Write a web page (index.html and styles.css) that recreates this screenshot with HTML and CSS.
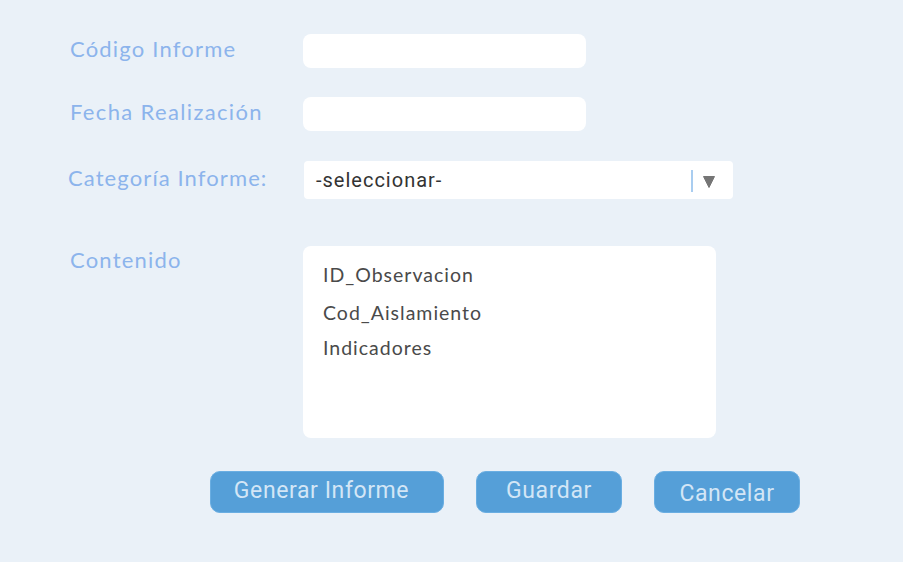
FILE: index.html
```html
<!DOCTYPE html>
<html lang="es">
<head>
<meta charset="utf-8">
<title>Informe</title>
<link rel="stylesheet" href="styles.css">
</head>
<body>
<main class="form">
  <div class="row row-1">
    <label class="label">Código Informe</label>
    <div class="input"></div>
  </div>
  <div class="row row-2">
    <label class="label label-long">Fecha Realización</label>
    <div class="input"></div>
  </div>
  <div class="row row-3">
    <label class="label label-cat">Categoría Informe:</label>
    <div class="select">
      <span class="select-text">-seleccionar-</span>
      <span class="select-divider"></span>
      <svg class="select-arrow" width="12" height="12" viewBox="0 0 12 12"><path d="M0.5 0.5 H11.5 L6 11.5 Z" fill="#757575" stroke="#757575" stroke-width="1" stroke-linejoin="round"/></svg>
    </div>
  </div>
  <div class="row row-4">
    <label class="label">Contenido</label>
    <div class="textarea">
      <div class="item item-1">ID_Observacion</div>
      <div class="item item-2">Cod_Aislamiento</div>
      <div class="item item-3">Indicadores</div>
    </div>
  </div>
  <div class="buttons">
    <button class="btn btn-wide">Generar Informe</button>
    <button class="btn">Guardar</button>
    <button class="btn btn-cancel">Cancelar</button>
  </div>
</main>
</body>
</html>
```
FILE: styles.css
```css
html, body {
  margin: 0;
  padding: 0;
  background: #eaf1f8;
  width: 903px;
  height: 562px;
  overflow: hidden;
}
.form {
  padding: 34px 0 0 70px;
  display: flex;
  flex-direction: column;
  font-family: "Lato", "Open Sans", sans-serif;
}
.row {
  display: flex;
  align-items: flex-start;
}
.label {
  width: 233px;
  flex: none;
  font-size: 22px;
  line-height: 26px;
  color: #8cb4ec;
  letter-spacing: 1.2px;
}
.label-long { letter-spacing: 1.35px; }
.row-1 .label { margin-top: 2px; }
.row-2 { margin-top: 29px; }
.row-2 .label { margin-top: 2px; }
.row-3 { margin-top: 30px; }
.row-4 { margin-top: 47px; }
.input {
  width: 283px;
  height: 34px;
  background: #fff;
  border-radius: 8px;
}
.label-cat {
  margin-left: -2px;
  width: 236px;
  margin-top: 4px;
  letter-spacing: 1.1px;
}
.select {
  width: 429px;
  height: 38px;
  background: #fff;
  border-radius: 4px;
  display: flex;
  align-items: center;
  font-family: "Roboto", sans-serif;
}
.select-text {
  margin-left: 12px;
  font-size: 20px;
  color: #333;
  flex: 1;
  letter-spacing: 1px;
}
.select-divider {
  width: 2px;
  height: 22px;
  background: #a9cdf0;
  margin-right: 10px;
  margin-top: 2px;
}
.select-arrow {
  margin-right: 18px;
  margin-top: 3px;
}
.row-4 .label { margin-top: 1px; }
.textarea {
  width: 413px;
  height: 192px;
  background: #fff;
  border-radius: 8px;
  padding: 17px 0 0 20px;
  box-sizing: border-box;
  color: #4a4a4a;
  font-size: 19.5px;
  letter-spacing: 1px;
}
.item { line-height: 24px; }
.item-2 { margin-top: 14px; }
.item-3 { margin-top: 11px; }
.buttons {
  display: flex;
  gap: 32px;
  margin-top: 33px;
  margin-left: 140px;
}
.btn {
  width: 146px;
  height: 42px;
  border: 1px solid #6aaee2;
  background: #559fd8;
  border-radius: 10px;
  color: #d3e6f6;
  font-family: "Roboto", "Open Sans", sans-serif;
  font-size: 23px;
  letter-spacing: 0.6px;
  padding: 0;
  padding-bottom: 3px;
}
.btn-wide { width: 234px; padding-right: 11px; }
.btn-cancel { padding-bottom: 0; padding-top: 2px; }
```
